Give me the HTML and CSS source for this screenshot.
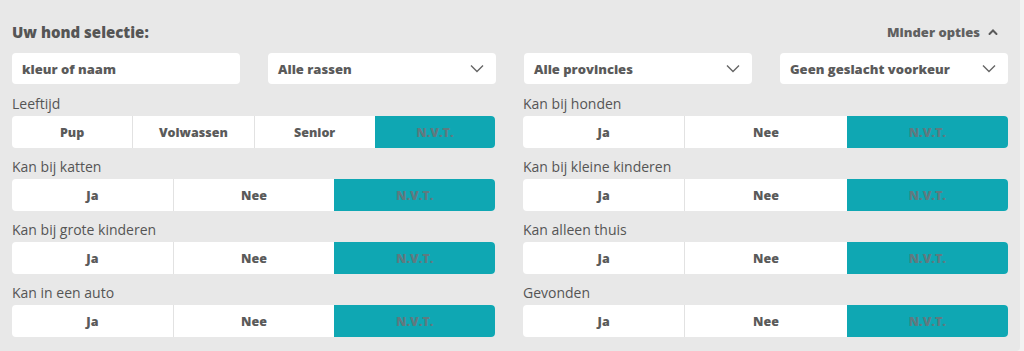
FILE: index.html
```html
<!DOCTYPE html>
<html lang="nl">
<head>
    <meta charset="UTF-8">
    <meta name="viewport" content="width=device-width, initial-scale=1.0">
    <title>Uw hond selectie</title>
    <link rel="stylesheet" href="styles.css">
</head>
<body>
    <div class="filter-panel">
        <div class="filter-head">
            <h2>Uw hond selectie:</h2>
            <a class="toggle-link" href="#">Minder opties
                <svg width="10" height="8" viewBox="0 0 10 8"><path d="M1.5 6 L5 2.5 L8.5 6" fill="none" stroke="#5a5a5a" stroke-width="2" stroke-linecap="round"/></svg>
            </a>
        </div>

        <div class="field-row">
            <div class="field">kleur of naam</div>
            <div class="field select">Alle rassen
                <svg width="14" height="9" viewBox="0 0 14 9"><path d="M1 1.5 L7 7.5 L13 1.5" fill="none" stroke="#666" stroke-width="1.4"/></svg>
            </div>
            <div class="field select">Alle provincies
                <svg width="14" height="9" viewBox="0 0 14 9"><path d="M1 1.5 L7 7.5 L13 1.5" fill="none" stroke="#666" stroke-width="1.4"/></svg>
            </div>
            <div class="field select">Geen geslacht voorkeur
                <svg width="14" height="9" viewBox="0 0 14 9"><path d="M1 1.5 L7 7.5 L13 1.5" fill="none" stroke="#666" stroke-width="1.4"/></svg>
            </div>
        </div>

        <div class="option-grid">
            <div class="option">
                <label>Leeftijd</label>
                <div class="segments">
                    <span>Pup</span><span>Volwassen</span><span>Senior</span><span class="active">N.V.T.</span>
                </div>
            </div>
            <div class="option">
                <label>Kan bij honden</label>
                <div class="segments">
                    <span>Ja</span><span>Nee</span><span class="active">N.V.T.</span>
                </div>
            </div>
            <div class="option">
                <label>Kan bij katten</label>
                <div class="segments">
                    <span>Ja</span><span>Nee</span><span class="active">N.V.T.</span>
                </div>
            </div>
            <div class="option">
                <label>Kan bij kleine kinderen</label>
                <div class="segments">
                    <span>Ja</span><span>Nee</span><span class="active">N.V.T.</span>
                </div>
            </div>
            <div class="option">
                <label>Kan bij grote kinderen</label>
                <div class="segments">
                    <span>Ja</span><span>Nee</span><span class="active">N.V.T.</span>
                </div>
            </div>
            <div class="option">
                <label>Kan alleen thuis</label>
                <div class="segments">
                    <span>Ja</span><span>Nee</span><span class="active">N.V.T.</span>
                </div>
            </div>
            <div class="option">
                <label>Kan in een auto</label>
                <div class="segments">
                    <span>Ja</span><span>Nee</span><span class="active">N.V.T.</span>
                </div>
            </div>
            <div class="option">
                <label>Gevonden</label>
                <div class="segments">
                    <span>Ja</span><span>Nee</span><span class="active">N.V.T.</span>
                </div>
            </div>
        </div>
    </div>
</body>
</html>
```

FILE: styles.css
```css
body {
    margin: 0;
    background: #f2f2f2;
    font-family: "Open Sans", "Liberation Sans", sans-serif;
    color: #555;
}
.filter-panel {
    width: 1020px;
    height: 351px;
    box-sizing: border-box;
    background: #e8e8e8;
    border-radius: 0 0 4px 0;
    padding: 22px 12px 0 12px;
}
.filter-head {
    display: flex;
    justify-content: space-between;
    align-items: center;
    height: 20px;
    padding-right: 10px;
    width: 996px;
    box-sizing: border-box;
}
.filter-head h2 {
    margin: 0;
    font-weight: 800;
    font-size: 15px;
    color: #555;
}
.toggle-link {
    font-weight: 800;
    font-size: 13px;
    color: #606060;
    text-decoration: none;
    display: flex;
    align-items: center;
    gap: 8px;
}
.field-row {
    display: grid;
    grid-template-columns: repeat(4, 228px);
    column-gap: 28px;
    margin-top: 11px;
}
.field {
    height: 31px;
    background: #fff;
    border-radius: 4px;
    display: flex;
    align-items: center;
    justify-content: space-between;
    padding: 0 12px 0 10px;
    font-weight: 800;
    font-size: 13px;
    color: #5a5a5a;
}
.option-grid {
    display: grid;
    grid-template-columns: 483px 485px;
    column-gap: 28px;
    row-gap: 9px;
    margin-top: 10px;
}
.option label {
    display: block;
    font-size: 14px;
    line-height: 20px;
    margin-bottom: 2px;
    color: #555;
}
.segments {
    display: flex;
    height: 32px;
    background: #fff;
    border-radius: 4px;
    overflow: hidden;
}
.segments span {
    flex: 1;
    display: flex;
    align-items: center;
    justify-content: center;
    font-weight: 800;
    font-size: 12.5px;
    color: #5a5a5a;
    border-left: 1px solid #e2e2e2;
}
.segments span:first-child {
    border-left: none;
}
.segments span.active {
    background: #0fa7b3;
    color: #5f7a80;
    border-left: none;
}
```
